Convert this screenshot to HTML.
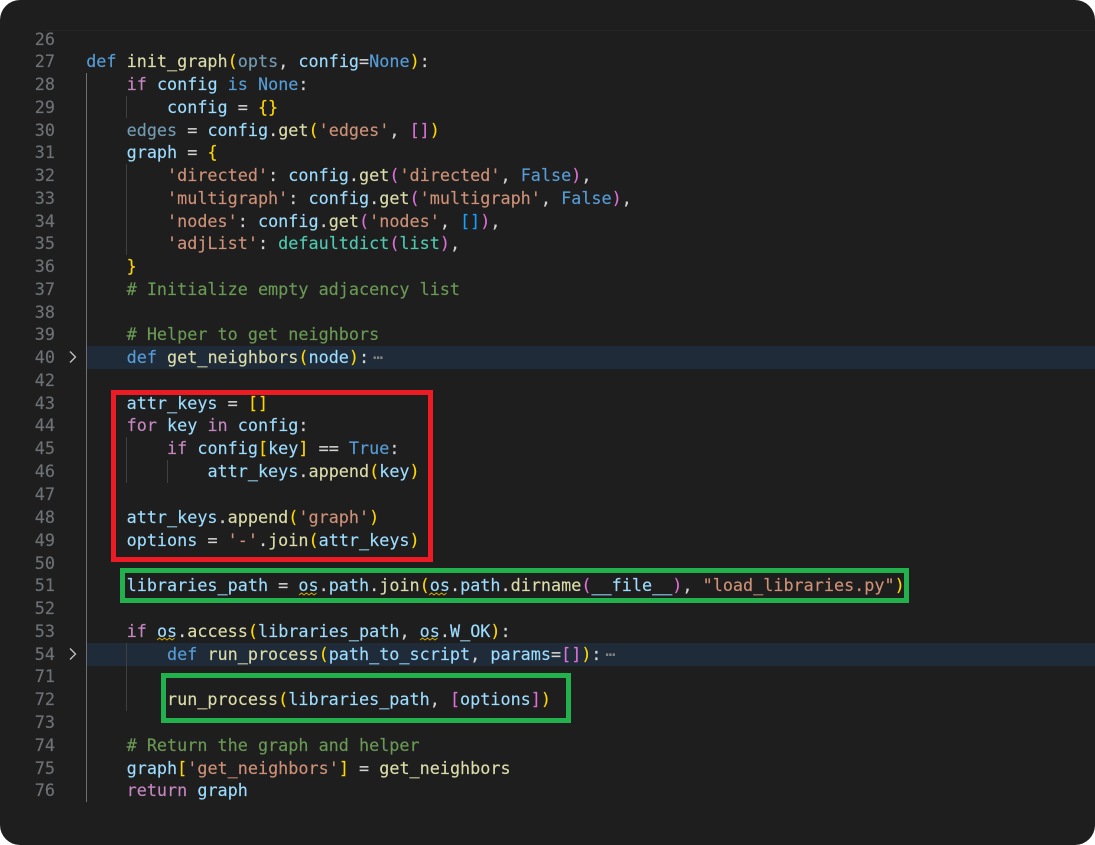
<!DOCTYPE html>
<html><head><meta charset="utf-8"><style>
html,body{margin:0;padding:0;background:#fff;width:1095px;height:845px;overflow:hidden}
#w{position:relative;width:1095px;height:845px;background:#1e1e1e;border-radius:20px;overflow:hidden;font-family:"DejaVu Sans Mono","Liberation Mono",monospace;font-size:16.8px;color:#d4d4d4;-webkit-text-stroke:.15px}
#n,#c{position:absolute;top:27.5px}
#n{left:20px;width:35px;text-align:right;color:#6e7276}
#c{left:86.2px;width:1000px}
#n div,#c div{height:23px;line-height:23px;white-space:pre}
#n div:nth-child(1),#c div:nth-child(1),#n div:nth-child(5),#c div:nth-child(5),#n div:nth-child(9),#c div:nth-child(9),#n div:nth-child(13),#c div:nth-child(13),#n div:nth-child(17),#c div:nth-child(17),#n div:nth-child(24),#c div:nth-child(24),#n div:nth-child(28),#c div:nth-child(28),#n div:nth-child(33),#c div:nth-child(33){height:22px}
.a{position:absolute}
.k{color:#569cd6}.p{color:#c586c0}.f{color:#dcdcaa}.v{color:#9cdcfe}.s{color:#ce9178}.m{color:#6a9955}.t{color:#4ec9b0}
.d{color:#9cdcfe;opacity:.66}.g{color:#ffd700}.o{color:#da70d6}.b{color:#179fff}.e{color:#858585;position:relative;left:4px}
.h{position:absolute;left:86px;right:0;height:23px;background:#1f2b38}
.i{position:absolute;width:1px;background:#404040}
.x{position:absolute;box-sizing:border-box;border:5px solid}
</style></head><body><div id="w">
<div class="a" style="left:45px;right:0;top:30px;height:1px;background:#232323"></div>
<div class="h" style="top:346px"></div>
<div class="h" style="top:643px"></div>
<div class="i" style="left:86px;top:73px;height:729px;background:#707070"></div>
<div class="i" style="left:126px;top:96px;height:22px"></div>
<div class="i" style="left:126px;top:164px;height:91px"></div>
<div class="i" style="left:126px;top:437px;height:46px"></div>
<div class="i" style="left:167px;top:460px;height:23px"></div>
<div class="i" style="left:126px;top:643px;height:68px"></div>
<div id="n"><div>26</div><div>27</div><div>28</div><div>29</div><div>30</div><div>31</div><div>32</div><div>33</div><div>34</div><div>35</div><div>36</div><div>37</div><div>38</div><div>39</div><div>40</div><div>42</div><div>43</div><div>44</div><div>45</div><div>46</div><div>47</div><div>48</div><div>49</div><div>50</div><div>51</div><div>52</div><div>53</div><div>54</div><div>71</div><div>72</div><div>73</div><div>74</div><div>75</div><div>76</div></div>
<div id="c"><div> </div>
<div><span class="k">def</span> <span class="f">init_graph</span><span class="g">(</span><span class="d">opts</span>, <span class="v">config</span>=<span class="k">None</span><span class="g">)</span>:</div>
<div>    <span class="p">if</span> <span class="v">config</span> <span class="k">is</span> <span class="k">None</span>:</div>
<div>        <span class="v">config</span> = <span class="g">{}</span></div>
<div>    <span class="d">edges</span> = <span class="v">config</span>.<span class="f">get</span><span class="g">(</span><span class="s">'edges'</span>, <span class="o">[]</span><span class="g">)</span></div>
<div>    <span class="v">graph</span> = <span class="g">{</span></div>
<div>        <span class="s">'directed'</span>: <span class="v">config</span>.<span class="f">get</span><span class="o">(</span><span class="s">'directed'</span>, <span class="k">False</span><span class="o">)</span>,</div>
<div>        <span class="s">'multigraph'</span>: <span class="v">config</span>.<span class="f">get</span><span class="o">(</span><span class="s">'multigraph'</span>, <span class="k">False</span><span class="o">)</span>,</div>
<div>        <span class="s">'nodes'</span>: <span class="v">config</span>.<span class="f">get</span><span class="o">(</span><span class="s">'nodes'</span>, <span class="b">[]</span><span class="o">)</span>,</div>
<div>        <span class="s">'adjList'</span>: <span class="t">defaultdict</span><span class="o">(</span><span class="t">list</span><span class="o">)</span>,</div>
<div>    <span class="g">}</span></div>
<div>    <span class="m"># Initialize empty adjacency list</span></div>
<div> </div>
<div>    <span class="m"># Helper to get neighbors</span></div>
<div>    <span class="k">def</span> <span class="f">get_neighbors</span><span class="g">(</span><span class="v">node</span><span class="g">)</span>:<span class="e">⋯</span></div>
<div> </div>
<div>    <span class="v">attr_keys</span> = <span class="g">[]</span></div>
<div>    <span class="p">for</span> <span class="v">key</span> <span class="p">in</span> <span class="v">config</span>:</div>
<div>        <span class="p">if</span> <span class="v">config</span><span class="g">[</span><span class="v">key</span><span class="g">]</span> == <span class="k">True</span>:</div>
<div>            <span class="v">attr_keys</span>.<span class="f">append</span><span class="g">(</span><span class="v">key</span><span class="g">)</span></div>
<div> </div>
<div>    <span class="v">attr_keys</span>.<span class="f">append</span><span class="g">(</span><span class="s">'graph'</span><span class="g">)</span></div>
<div>    <span class="v">options</span> = <span class="s">'-'</span>.<span class="f">join</span><span class="g">(</span><span class="v">attr_keys</span><span class="g">)</span></div>
<div> </div>
<div>    <span class="v">libraries_path</span> = <span class="v">os</span>.<span class="v">path</span>.<span class="f">join</span><span class="g">(</span><span class="v">os</span>.<span class="v">path</span>.<span class="f">dirname</span><span class="o">(</span><span class="v">__file__</span><span class="o">)</span>, <span class="s">"load_libraries.py"</span><span class="g">)</span></div>
<div> </div>
<div>    <span class="p">if</span> <span class="v">os</span>.<span class="f">access</span><span class="g">(</span><span class="v">libraries_path</span>, <span class="v">os</span>.<span class="v">W_OK</span><span class="g">)</span>:</div>
<div>        <span class="k">def</span> <span class="f">run_process</span><span class="g">(</span><span class="v">path_to_script</span>, <span class="v">params</span>=<span class="o">[]</span><span class="g">)</span>:<span class="e">⋯</span></div>
<div> </div>
<div>        <span class="f">run_process</span><span class="g">(</span><span class="v">libraries_path</span>, <span class="o">[</span><span class="v">options</span><span class="o">]</span><span class="g">)</span></div>
<div> </div>
<div>    <span class="m"># Return the graph and helper</span></div>
<div>    <span class="v">graph</span><span class="g">[</span><span class="s">'get_neighbors'</span><span class="g">]</span> = <span class="f">get_neighbors</span></div>
<div>    <span class="p">return</span> <span class="v">graph</span></div></div>
<svg class="a" style="left:0;top:0" width="1095" height="845" fill="none">
<path d="M70 351.500L75.500 357L70 362.500" stroke="#c5c5c5" stroke-width="1.300"/>
<path d="M70 648.500L75.500 654L70 659.500" stroke="#c5c5c5" stroke-width="1.300"/>
<g stroke="#cca700" stroke-width="1">
<path d="M299 595l2.500-2 2.500 2 2.500-2 2.500 2 2.500-2 2.500 2 2.500-2"/>
<path d="M429 595l2.500-2 2.500 2 2.500-2 2.500 2 2.500-2 2.500 2 2.500-2"/>
<path d="M157 640l2.500-2 2.500 2 2.500-2 2.500 2 2.500-2 2.500 2 2.500-2"/>
<path d="M420 640l2.500-2 2.500 2 2.500-2 2.500 2 2.500-2 2.500 2 2.500-2"/>
</g>
</svg>
<div class="x" style="left:111px;top:389.500px;width:322px;height:172.500px;border-color:#ed1c24"></div>
<div class="x" style="left:120px;top:568px;width:789px;height:35px;border-color:#22b14c"></div>
<div class="x" style="left:161px;top:673px;width:410px;height:50px;border-color:#22b14c"></div>
</div></body></html>
